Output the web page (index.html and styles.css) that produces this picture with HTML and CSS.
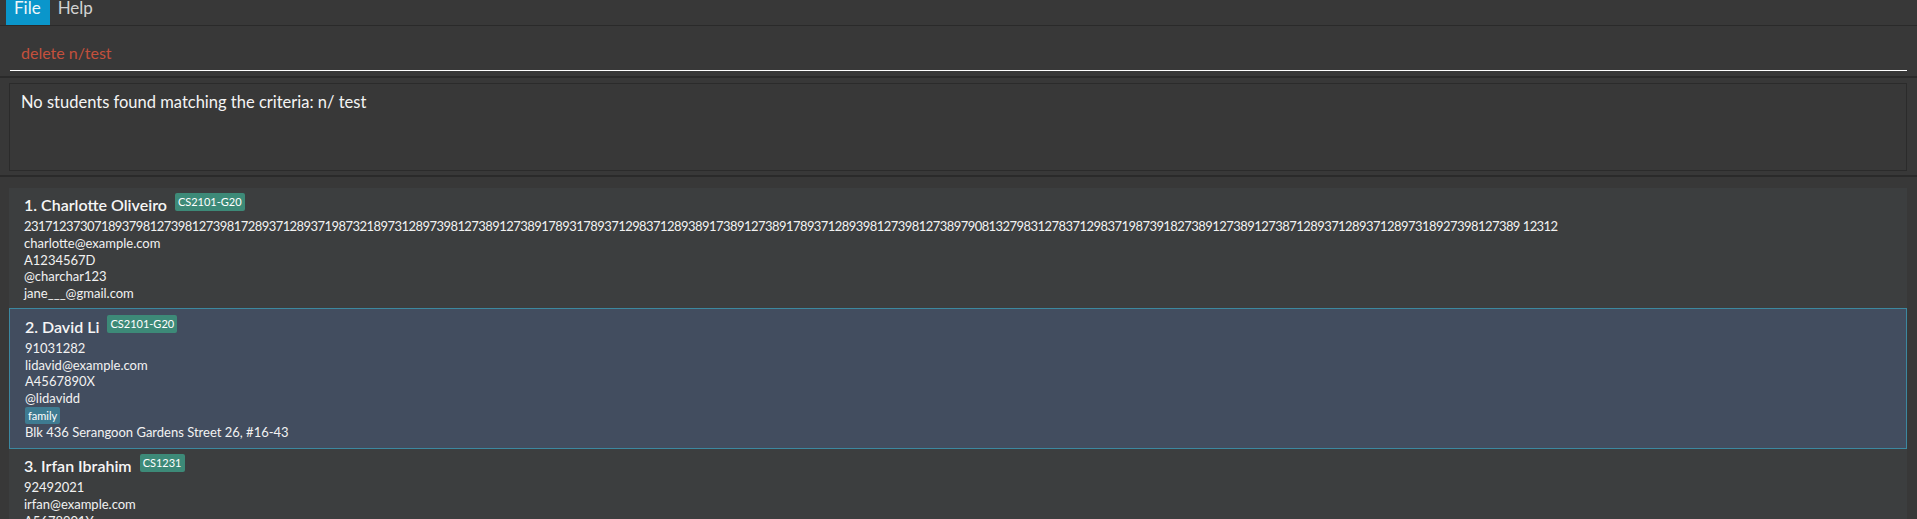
FILE: index.html
```html
<!DOCTYPE html>
<html lang="en">
<head>
<meta charset="utf-8">
<title>Address Book</title>
<link rel="stylesheet" href="styles.css">
</head>
<body>
<div class="app">
  <nav class="menubar">
    <div class="menu-item active">File</div>
    <div class="menu-item">Help</div>
  </nav>
  <section class="command-panel">
    <div class="command-input">delete n/test</div>
  </section>
  <section class="result-panel">
    <div class="result-box">No students found matching the criteria: n/ test</div>
  </section>
  <section class="list-panel">
    <article class="card">
      <div class="name-row"><span class="name">1. Charlotte Oliveiro</span><span class="tag tag-group">CS2101-G20</span></div>
      <div class="details">
        <div class="line phone">2317123730718937981273981273981728937128937198732189731289739812738912738917893178937129837128938917389127389178937128939812739812738979081327983127837129837198739182738912738912738712893712893712897318927398127389 12312</div>
        <div class="line">charlotte@example.com</div>
        <div class="line">A1234567D</div>
        <div class="line">@charchar123</div>
        <div class="line">jane___@gmail.com</div>
      </div>
    </article>
    <article class="card selected">
      <div class="name-row"><span class="name">2. David Li</span><span class="tag tag-group">CS2101-G20</span></div>
      <div class="details">
        <div class="line">91031282</div>
        <div class="line">lidavid@example.com</div>
        <div class="line">A4567890X</div>
        <div class="line">@lidavidd</div>
        <div class="line"><span class="tag tag-family">family</span></div>
        <div class="line">Blk 436 Serangoon Gardens Street 26, #16-43</div>
      </div>
    </article>
    <article class="card">
      <div class="name-row"><span class="name">3. Irfan Ibrahim</span><span class="tag tag-group">CS1231</span></div>
      <div class="details">
        <div class="line">92492021</div>
        <div class="line">irfan@example.com</div>
        <div class="line">A5678901Y</div>
        <div class="line">@irfanib</div>
      </div>
    </article>
  </section>
</div>
</body>
</html>
```
FILE: styles.css
```css
* { box-sizing: border-box; }
html, body {
  margin: 0;
  padding: 0;
  background: #383838;
  font-family: Lato, "Open Sans", sans-serif;
  color: #ffffff;
}
.app {
  width: 1917px;
  height: 519px;
  overflow: hidden;
  display: flex;
  flex-direction: column;
}
.menubar {
  display: flex;
  height: 26px;
  flex: none;
  border-bottom: 1px solid #2a2a2a;
  background: #383838;
}
.menu-item {
  height: 25px;
  padding: 1px 8px 0;
  font-size: 17px;
  line-height: 14px;
  color: #d2d2d2;
}
.menu-item.active {
  background: #0a96cb;
  color: #eef6fa;
  margin-left: 6px;
  padding: 1px 9px 0 8px;
}
.command-panel {
  flex: none;
  height: 52px;
  padding: 0 10px 0 10px;
  border-bottom: 2px solid #2a2a2a;
}
.command-input {
  height: 45px;
  padding: 8px 0 0 11px;
  border-bottom: 1px solid #ffffff;
  display: flex;
  align-items: center;
  font-size: 16px;
  color: #c4503c;
}
.result-panel {
  flex: none;
  height: 99px;
  padding: 5px 10px 0 9px;
  border-bottom: 2px solid #2a2a2a;
}
.result-box {
  height: 88px;
  border: 1px solid #2b2b2b;
  padding: 7px 11px 0;
  font-size: 16.5px;
  line-height: 22px;
  color: #f4f4f4;
}
.list-panel {
  flex: 1;
  padding: 11px 10px 0 9px;
  display: flex;
  flex-direction: column;
}
.card {
  flex: none;
  background: #3c3e3f;
  padding: 4px 15px 6px 15px;
}
.card.selected {
  background: #424d5f;
  border: 1px solid #3c88a0;
  padding: 5px 15px 8px 15px;
}
.name-row {
  display: flex;
  align-items: flex-start;
  gap: 8px;
  height: 26px;
}
.name {
  font-size: 16px;
  font-weight: 600;
  line-height: 26px;
  color: #f6f6f6;
}
.tag {
  display: inline-block;
  border-radius: 2px;
  font-size: 11px;
  color: #ffffff;
  padding: 0 3px;
}
.tag-group {
  background: #3d8a78;
  height: 18px;
  line-height: 18px;
  margin-top: 1px;
}
.tag-family {
  background: #3e7b91;
  height: 17px;
  line-height: 17px;
  vertical-align: top;
}
.details {
  display: flex;
  flex-direction: column;
}
.line {
  font-size: 13px;
  line-height: 16.75px;
  height: 16.75px;
  color: #f2f2f2;
  white-space: nowrap;
}
.phone {
  letter-spacing: -0.55px;
}
```
